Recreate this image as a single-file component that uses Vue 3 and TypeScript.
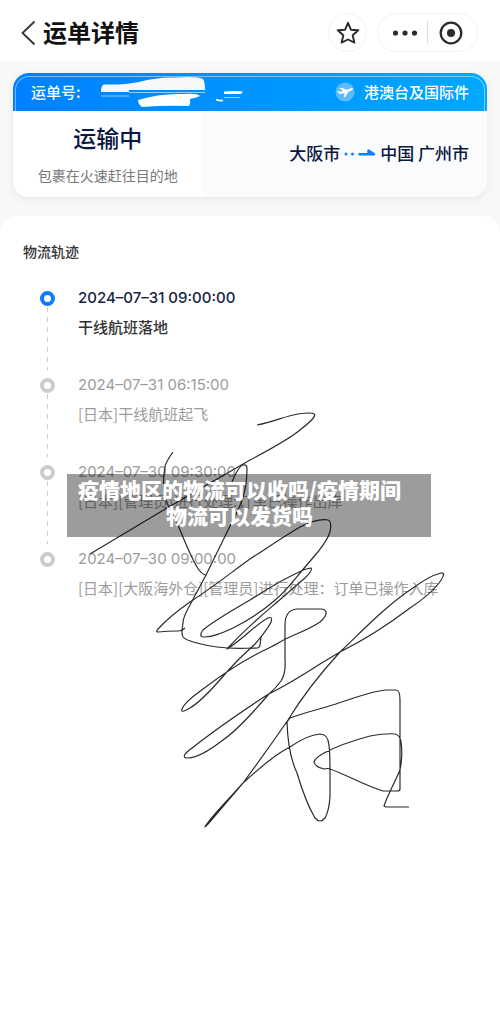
<script setup lang="ts">
interface TrackEvent {
  time: string
  text: string
}

const events: TrackEvent[] = [
  { time: '2024–07–31 09:00:00', text: '干线航班落地' },
  { time: '2024–07–31 06:15:00', text: '[日本]干线航班起飞' },
  { time: '2024–07–30 09:30:00', text: '[日本][管理员]进行处理:订单已操作出库' },
  { time: '2024–07–30 09:00:00', text: '[日本][大阪海外仓][管理员]进行处理：订单已操作入库' },
]
</script>

<template>
  <div class="page">
    <header class="nav">
      <button class="back" aria-label="返回">
        <svg width="16" height="26" viewBox="0 0 16 26"><path d="M14.5 1.500 2.500 13l12 11.500" fill="none" stroke="#333" stroke-width="1.800" /></svg>
      </button>
      <h1>运单详情</h1>
      <button class="round" aria-label="收藏">
        <svg width="24" height="24" viewBox="0 0 24 24"><path d="M12 1.800 14.900 8.700 22.300 9.300 16.700 14.200 18.400 21.600 12 18.500 5.600 21.600 7.300 14.200 1.700 9.300 9.100 8.700Z" fill="none" stroke="#2b2b2b" stroke-width="1.900" stroke-linejoin="round" /></svg>
      </button>
      <div class="capsule">
        <button aria-label="更多">
          <svg width="26" height="8" viewBox="0 0 26 8" fill="#2b2b2b"><circle cx="3.500" cy="4" r="2.600" /><circle cx="13" cy="4" r="2.600" /><circle cx="22.500" cy="4" r="2.600" /></svg>
        </button>
        <button aria-label="关闭">
          <svg width="24" height="24" viewBox="0 0 24 24"><circle cx="12" cy="12" r="10.300" fill="none" stroke="#2b2b2b" stroke-width="2.300" /><circle cx="12" cy="12" r="4" fill="#2b2b2b" /></svg>
        </button>
      </div>
    </header>

    <section class="card">
      <div class="card-head">
        <span>运单号:</span>
        <svg class="mask" width="146" height="33" viewBox="0 0 146 33">
          <path d="M1 16Q1 9 4 8.500Q25 9 39 6Q57 1 75 1.500Q98 0 103 3Q105 5 105 14H29V16Z" fill="#f6f8fa" />
          <path d="M1 20H29M29 16.500H105" stroke="#8fd0ff" />
          <path d="M38 24Q60 17 84 18Q97 17 100 20Q96 22 90 23Q91 27 89 30Q65 29 42 31Q38 28 38 24Z" fill="#fff" />
          <path d="M124 15.500Q134 14.500 143 15.500L141 18H124Z" fill="#fff" />
          <path d="M124 21.500H140" stroke="#8fd0ff" />
          <path d="M116 23.500Q119 25 123 24.500" fill="none" stroke="#fff" stroke-width="1.500" />
        </svg>
        <svg class="plane" width="20" height="20" viewBox="0 0 20 20">
          <circle cx="10" cy="10" r="9.500" fill="#5cbcff" />
          <path d="M2 9.500 3.500 9 5.500 9.700 8.300 8.900 4.500 6.200 6.500 5.700 11.800 7.800 16 6.200Q18.300 5.800 18 7Q17.500 8 15.500 8.800L13.300 9.700 10.400 14.700 8.800 15.200 9.600 10.900 5 12.100Z" fill="#fff" />
        </svg>
        <span>港澳台及国际件</span>
      </div>
      <div class="card-body">
        <div class="status">
          <strong>运输中</strong>
          <span>包裹在火速赶往目的地</span>
        </div>
        <div class="route">
          <span>大阪市</span>
          <svg width="32" height="8" viewBox="0 0 32 8"><circle cx="2" cy="5" r="1.500" fill="#0a80ff" /><circle cx="8.500" cy="5" r="1.500" fill="#0a80ff" /><path d="M15.500 5.200H30L24.500 1.500V5" fill="#0a80ff" stroke="#0a80ff" stroke-width="2.500" stroke-linecap="round" stroke-linejoin="round" /></svg>
          <span>中国 广州市</span>
        </div>
      </div>
    </section>

    <main class="panel">
      <h2>物流轨迹</h2>
      <ol class="track">
        <li v-for="(event, index) in events" :key="event.time" :class="{ active: index === 0 }">
          <i class="dot"></i>
          <time>{{ event.time }}</time>
          <p>{{ event.text }}</p>
        </li>
      </ol>
    </main>

    <svg class="signature" width="380" height="430" viewBox="80 405 380 430" aria-hidden="true">
      <path d="M257 425C274 422 285 416 298 414Q312 412 314 414Q318 416 300 430C288 440 269 450 250 460L167 508L90 554" />
      <path d="M173 452C168 459 165 464 165 467C163 478 162 489 167 503L178 525C185 542 190 555 197 567Q202 575 206 575" />
      <path d="M232 482C236 472 240 466 243 465Q247 464 247 469C247 492 240 507 233 520L206 575L190 605Q183 617 183 623Q181 634 183 637C186 641 203 645 217 647Q232 649 253 648Q260 649 260 645L261 637" />
      <path d="M185 628Q182 631 178 631Q167 631 158 632Q155 632 159 628C169 617 180 609 190 602C216 585 233 571 250 559C267 548 283 537 300 527Q318 518 328 520Q332 521 330 532C327 541 321 548 317 553L300 573C291 584 285 592 274 601C259 614 247 621 233 628C222 633 213 637 204 637Q198 637 203 630C212 622 231 611 250 600C263 592 278 582 293 575Q306 568 311 568Q313 570 305 578L283 597C266 612 249 625 227 649C241 641 256 624 268 618Q273 616 271 622C268 629 261 637 255 644L238 660L225 674C214 687 202 701 190 708Q180 714 182 709Q184 703 199 692C216 679 238 664 255 655C264 650 274 646 280 642C294 634 307 631 320 622Q327 616 326 612Q325 609 321 609H297Q285 610 285 625V660Q286 673 281 681Q276 688 268 695C251 715 236 731 223 740C210 750 197 758 188 758Q181 758 187 752C212 732 241 712 267 695C283 687 303 675 320 664L340 652C368 638 389 624 410 608C424 599 432 592 439 583Q447 572 441 573Q429 576 413 588C388 604 362 631 340 652C319 675 302 697 288 720Q266 752 243 783C230 798 218 809 206 825Q203 829 208 824L243 783C262 766 276 754 290 747Q307 735 320 734Q328 734 329 745Q330 755 330 768V797Q329 811 325 818Q320 824 315 818Q306 803 297 773Q288 754 287 722L290 718C309 711 321 709 336 704C354 698 371 691 387 690H396Q400 690 400 700V789Q400 791 397 791H383C366 786 347 775 330 769Q328 768 324 769Q315 767 314 762Q315 758 324 753C337 746 355 740 370 736Q387 733 395 734Q400 735 401 742Q403 755 400 770C395 782 387 796 384 806L386 807H409" />
    </svg>

    <div class="caption">疫情地区的物流可以收吗/疫情期间<br />物流可以发货吗</div>
  </div>
</template>

<style>
body {
  margin: 0;
}
</style>

<style scoped>
.page {
  position: relative;
  display: flex;
  flex-direction: column;
  min-height: 100vh;
  box-sizing: border-box;
  background: #f8f8f8;
  font-family: "Noto Sans CJK SC", sans-serif;
  color: #333;
}
h1, h2, ol, p {
  margin: 0;
  padding: 0;
}
button {
  display: flex;
  align-items: center;
  justify-content: center;
  padding: 0;
  border: 0;
  background: none;
}
svg {
  display: block;
  flex: none;
}
.nav {
  display: flex;
  align-items: center;
  height: 61px;
  padding: 4px 22px 0 20px;
  box-sizing: border-box;
  background: #fff;
}
.nav h1 {
  flex: 1;
  padding: 0 0 2px 7px;
  font-size: 24px;
  line-height: 32px;
  font-weight: 700;
  color: #111;
}
.round {
  width: 39px;
  height: 39px;
  border: 1px solid #f2f2f2;
  border-radius: 50%;
}
.capsule {
  display: flex;
  align-items: center;
  width: 101px;
  height: 39px;
  margin-left: 10px;
  box-sizing: border-box;
  border: 1px solid #f2f2f2;
  border-radius: 20px;
}
.capsule button {
  flex: 1;
  height: 23px;
}
.capsule button:first-child {
  padding-left: 4px;
  border-right: 1px solid #ddd;
}
.capsule button:last-child {
  padding-right: 4px;
}
.card {
  margin: 12px 13px 0;
  border-radius: 16px;
  background: #fff;
  box-shadow: 0 2px 8px rgba(0, 0, 0, 0.07);
  overflow: hidden;
}
.card-head {
  position: relative;
  display: flex;
  align-items: center;
  height: 38px;
  padding: 0 18px;
  box-sizing: border-box;
  background: linear-gradient(90deg, #0080ff, #00a8ff);
  font-size: 15px;
  line-height: 22px;
  font-weight: 500;
  color: #fff;
}
.card-head::before {
  content: "";
  position: absolute;
  inset: 3px 2px 0;
  border: 1px solid rgba(255, 255, 255, 0.45);
  border-bottom: 0;
  border-radius: 14px 14px 0 0;
}
.mask {
  margin-left: 20px;
}
.plane {
  margin: 0 9px 0 auto;
}
.card-body {
  display: flex;
  height: 86px;
}
.status {
  display: flex;
  flex-direction: column;
  align-items: center;
  width: 40%;
  box-sizing: border-box;
  padding-top: 10px;
}
.status strong {
  font-size: 23px;
  line-height: 32px;
  font-weight: 500;
  color: #0b1740;
}
.status span {
  margin-top: 11px;
  font-size: 14px;
  line-height: 22px;
  color: #777;
}
.route {
  display: flex;
  align-items: center;
  justify-content: flex-end;
  gap: 4px;
  flex: 1;
  padding: 0 18px 2px 0;
  background: #f9fbfd;
  font-size: 17px;
  line-height: 24px;
  font-weight: 500;
  color: #0b1740;
}
.panel {
  flex: 1;
  margin-top: 19px;
  padding: 24px 23px;
  border-radius: 16px 16px 0 0;
  background: #fff;
}
.panel h2 {
  font-size: 14px;
  line-height: 22px;
  font-weight: 500;
}
.track {
  margin-top: 25px;
  list-style: none;
}
.track li {
  position: relative;
  height: 87px;
  padding-left: 55px;
  color: #9c9c9c;
}
.track li:not(:last-child)::before {
  content: "";
  position: absolute;
  left: 24px;
  top: 20px;
  bottom: 4px;
  width: 1px;
  background: repeating-linear-gradient(#ccc 0 5px, transparent 5px 10px);
}
.dot {
  position: absolute;
  left: 17px;
  top: 4px;
  width: 15px;
  height: 15px;
  box-sizing: border-box;
  border: 4px solid #ccc;
  border-radius: 50%;
}
.track time {
  display: block;
  font-family: Inter, "Noto Sans CJK SC", sans-serif;
  font-size: 15px;
  line-height: 22px;
}
.track p {
  margin-top: 7px;
  font-size: 15px;
  line-height: 22px;
  white-space: nowrap;
}
.track .active {
  font-weight: 500;
  color: #333;
}
.active time {
  color: #17233f;
}
.active .dot {
  border-color: #0a7cff;
}
.signature {
  position: absolute;
  left: 80px;
  top: 405px;
  fill: none;
  stroke: #2b2b2b;
  stroke-width: 1.2px;
  stroke-linejoin: round;
  pointer-events: none;
}
.caption {
  position: absolute;
  left: 67px;
  top: 474px;
  width: 364px;
  height: 63px;
  padding: 2px 19px 0 0;
  box-sizing: border-box;
  background: rgba(0, 0, 0, 0.39);
  font-size: 21px;
  line-height: 26px;
  font-weight: 900;
  text-align: center;
  white-space: nowrap;
  color: #fff;
}
</style>
